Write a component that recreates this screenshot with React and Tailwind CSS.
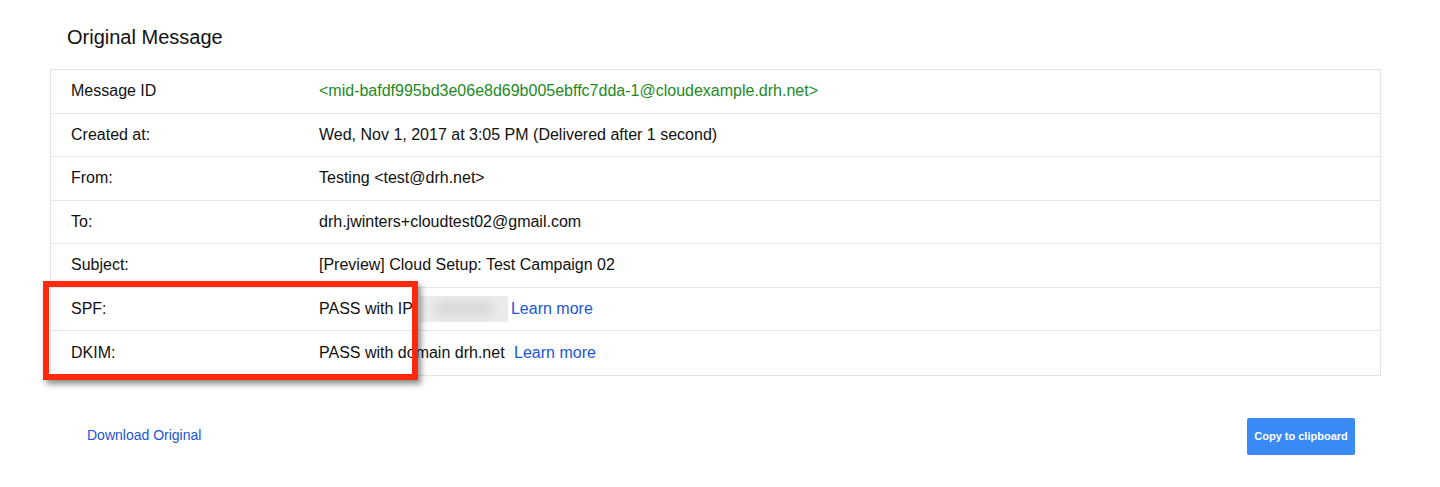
import React from "react";

const rows = [
  { label: "Message ID", value: <span className="text-[#1e8a1e]">&lt;mid-bafdf995bd3e06e8d69b005ebffc7dda-1@cloudexample.drh.net&gt;</span> },
  { label: "Created at:", value: "Wed, Nov 1, 2017 at 3:05 PM (Delivered after 1 second)" },
  { label: "From:", value: "Testing <test@drh.net>" },
  { label: "To:", value: "drh.jwinters+cloudtest02@gmail.com" },
  { label: "Subject:", value: "[Preview] Cloud Setup: Test Campaign 02" },
  {
    label: "SPF:",
    value: (
      <span className="flex items-center">
        <span>PASS with IP</span>
        <span className="relative ml-[7px] mr-[3px] inline-block h-[26px] w-[88px] overflow-hidden bg-[#ececec]">
          <span className="absolute left-[14px] top-[6px] h-[14px] w-[60px] rounded-full bg-[#d6d6d6] blur-[6px]"></span>
        </span>
        <span className="text-[#1a56d6]">Learn more</span>
      </span>
    ),
  },
  {
    label: "DKIM:",
    value: (
      <span>
        PASS with domain drh.net <span className="ml-[5px] text-[#1a56d6]">Learn more</span>
      </span>
    ),
  },
];

export default function App() {
  return (
    <div className="relative h-[487px] w-[1440px] bg-white text-[#111]" style={{ fontFamily: '"Liberation Sans", Arial, sans-serif' }}>
      <div className="pl-[67px] pt-[25px] text-[20px] leading-[24px] text-[#111]">Original Message</div>
      <div className="ml-[50px] mt-[20px] w-[1331px] border border-[#e3e3e3]">
        {rows.map((r, i) => (
          <div
            key={i}
            className={`flex h-[43.5px] items-center text-[16px] ${i < rows.length - 1 ? "border-b border-[#e6e6e6]" : ""}`}
          >
            <div className="w-[268px] shrink-0 pl-[20px]">{r.label}</div>
            <div>{r.value}</div>
          </div>
        ))}
      </div>
      <div className="mt-[42px] flex items-center justify-between pl-[87px] pr-[85px]">
        <span className="mt-[-2px] text-[14px] text-[#1a56d6]">Download Original</span>
        <button className="h-[37px] w-[108px] rounded-[2px] bg-[#3a8af5] text-[11px] font-bold text-white">
          Copy to clipboard
        </button>
      </div>
      <div className="pointer-events-none absolute left-[43px] top-[281px] h-[99px] w-[375px] border-[6px] border-[#ff2a0d] shadow-[3px_4px_6px_rgba(0,0,0,0.45)]"></div>
    </div>
  );
}
